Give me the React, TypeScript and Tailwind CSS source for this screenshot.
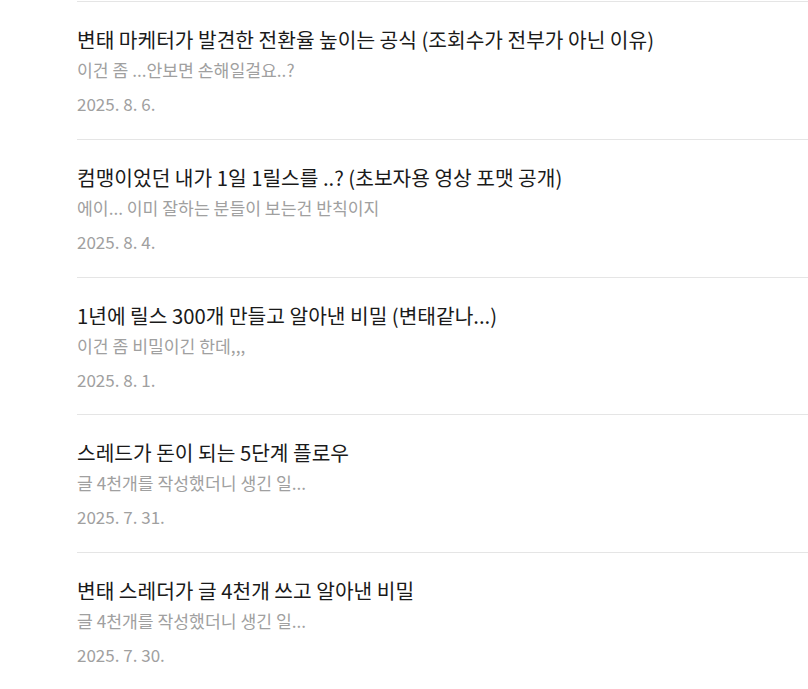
import React from "react";

const posts = [
  { title: "변태 마케터가 발견한 전환율 높이는 공식 (조회수가 전부가 아닌 이유)", sub: "이건 좀 ...안보면 손해일걸요..?", date: "2025. 8. 6." },
  { title: "컴맹이었던 내가 1일 1릴스를 ..? (초보자용 영상 포맷 공개)", sub: "에이... 이미 잘하는 분들이 보는건 반칙이지", date: "2025. 8. 4." },
  { title: "1년에 릴스 300개 만들고 알아낸 비밀 (변태같나...)", sub: "이건 좀 비밀이긴 한데,,,", date: "2025. 8. 1." },
  { title: "스레드가 돈이 되는 5단계 플로우", sub: "글 4천개를 작성했더니 생긴 일...", date: "2025. 7. 31." },
  { title: "변태 스레더가 글 4천개 쓰고 알아낸 비밀", sub: "글 4천개를 작성했더니 생긴 일...", date: "2025. 7. 30." },
];

export default function App() {
  return (
    <div
      className="min-h-screen bg-white pl-[77px] pt-[1px] overflow-hidden"
      style={{ fontFamily: '"Noto Sans CJK KR", "Noto Sans", sans-serif' }}
    >
      <ul>
        {posts.map((p, i) => (
          <li key={i} className="border-t border-[#e5e5e5] pt-[23px] pb-[22.75px]">
            <div className="text-[20.3px] leading-[28px] text-[#1a1a1a]">{p.title}</div>
            <div className="mt-[5px] text-[17.2px] leading-[24px] text-[#a0a0a0]">{p.sub}</div>
            <div className="mt-[10px] text-[17px] leading-[24px] text-[#a0a0a0]">{p.date}</div>
          </li>
        ))}
      </ul>
    </div>
  );
}
